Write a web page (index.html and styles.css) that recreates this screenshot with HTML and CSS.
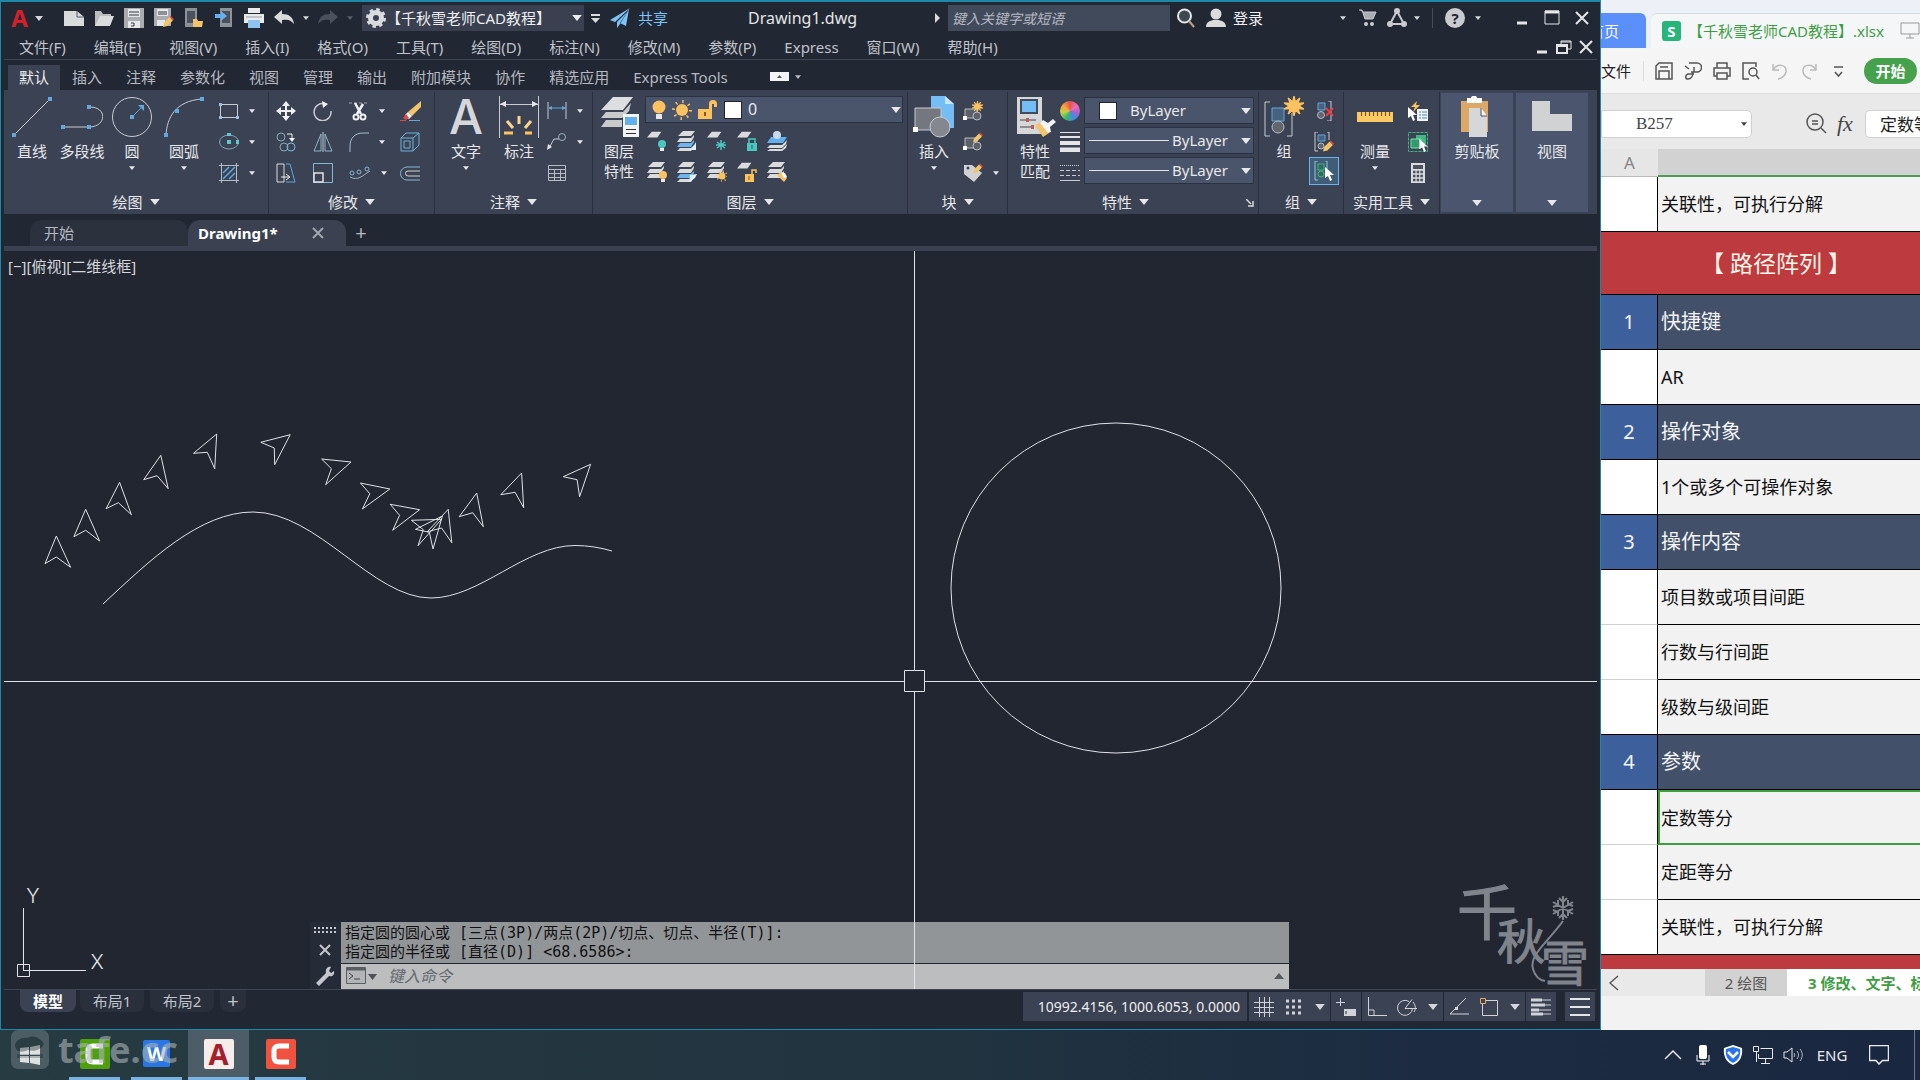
FILE: index.html
```html
<!DOCTYPE html>
<html lang="zh-CN">
<head>
<meta charset="utf-8">
<title>Drawing1.dwg</title>
<link rel="stylesheet" href="styles.css">
</head>
<body>
<svg class="sprite" aria-hidden="true">
  <symbol id="down" viewBox="0 0 8 5"><path d="M0 0h8L4 5z" fill="currentColor"/></symbol>
  <symbol id="sheet" viewBox="0 0 20 20"><path d="M6 1h12l-5 7H0z" fill="#d9dbdd"/></symbol>
  <symbol id="stack" viewBox="0 0 20 20"><path d="M6 0h12l-4 5H1z" fill="#d9dbdd"/><path d="M3 7h11l3-3v2l-3 5H0zM3 12h11l3-3v2l-3 5H0z" fill="#d9dbdd"/></symbol>
  <symbol id="stackblue" viewBox="0 0 20 20"><path d="M6 0h12l-4 5H1z" fill="#d9dbdd"/><path d="M3 7h11l3-3v2l-3 5H0z" fill="#d9dbdd"/><path d="M3 12h11l3-3v2l-3 5H0z" fill="#6fb6ee"/><path d="M3 17h11l3-3v2l-3 4H0z" fill="#d9dbdd"/></symbol>
  <symbol id="pencil" viewBox="0 0 10 10"><path d="M0 10l1-4 5-5 3 3-5 5z" fill="#f2c56b"/><path d="M6 1l1-1 3 3-1 1z" fill="#e04a3f"/></symbol>
  <symbol id="burst" viewBox="0 0 12 12"><path d="M6 0l.8 3.600L9.500 1.200 8.300 4.400 12 4.200 9 6l3 1.800-3.700-.2 1.200 3.200-2.700-2.400L6 12l-.8-3.600-2.700 2.400 1.200-3.200L0 7.800 3 6 0 4.200l3.700.2L2.500 1.200l2.700 2.400z" fill="#fbc25f" stroke="#fbc25f" stroke-width=".8"/></symbol>
  <symbol id="cursor" viewBox="0 0 10 14"><path d="M0 0v11l3-2 2 5 2-1-2-5h4z" fill="#fff"/></symbol>
</svg>
<div class="desktop">
<div class="work">
<main class="cad">
  <header class="titlebar">
    <button class="logo" aria-label="应用程序菜单"><span class="logo-a">A</span><svg class="dn"><use href="#down"/></svg></button>
    <div class="quick">
      <button aria-label="新建"><svg width="20" height="20"><path d="M0 3h13l7 6v9H0z" fill="#d9dbdd"/><path d="M13 3v6h7" fill="none" stroke="#555b68"/></svg></button>
      <button aria-label="打开"><svg width="20" height="20"><path d="M1 18V3h6l2 3h8v3" fill="#b9bcc0"/><path d="M1 18L6 8h14l-4 10z" fill="#d9dbdd"/></svg></button>
      <button aria-label="保存"><svg width="20" height="20"><path d="M0 0h20v20H0z" fill="#a9adb2"/><path d="M4 1h12v8H4zM4 13h12v7H4z" fill="#e6e7e9"/><path d="M5 4h10M5 7h10M7 15h3v3H7" stroke="#343a47" fill="none"/></svg></button>
      <button aria-label="另存为"><svg width="20" height="20"><path d="M0 0h17v18H0z" fill="#a9adb2"/><path d="M3 1h11v7H3zM3 12h8v6H3z" fill="#e6e7e9"/><path d="M4 4h9M4 6h9" stroke="#343a47"/><svg x="9" y="8" width="11" height="11"><use href="#pencil"/></svg></svg></button>
      <button aria-label="从云打开"><svg width="20" height="20"><path d="M1 0h12v19H1z" fill="#8d9299"/><path d="M3 3h8v12H3z" fill="#4b515e"/><path d="M9 19v-8h4l1 2h5l-1 6z" fill="#f2c56b"/></svg></button>
      <button aria-label="保存到云"><svg width="20" height="20"><path d="M6 0h12v19H6z" fill="#8d9299"/><path d="M8 3h8v12H8z" fill="#4b515e"/><path d="M1 6h6V3l6 5-6 5v-3H1z" fill="#62b0ee"/></svg></button>
      <button aria-label="打印"><svg width="20" height="20"><path d="M4 0h12v5H4zM0 6h20v9H0z" fill="#e9eaec"/><path d="M4 12h12v8H4z" fill="#8fc4f0"/><path d="M2 9h16" stroke="#9a9da5"/></svg></button>
      <button aria-label="放弃"><svg width="20" height="20"><path d="M0 9l8-7v4c7 0 11 3 12 10-3-4-6-5-12-4v4z" fill="#d9dbdd"/></svg></button>
      <button class="slim" aria-label="放弃列表"><svg class="dn sm"><use href="#down"/></svg></button>
      <button class="dim" aria-label="重做"><svg width="20" height="20"><path d="M20 9l-8-7v4C5 6 1 9 0 16c3-4 6-5 12-4v4z" fill="#4c515d"/></svg></button>
      <button class="slim dim" aria-label="重做列表"><svg class="dn sm"><use href="#down"/></svg></button>
    </div>
    <button class="workspace"><svg width="20" height="20" viewBox="-10 -10 20 20"><circle r="5.500" fill="none" stroke="#d9dbdd" stroke-width="5"/><circle r="8.500" fill="none" stroke="#d9dbdd" stroke-width="3" stroke-dasharray="3.400 3.270"/></svg><span>【千秋雪老师CAD教程】</span><svg class="dn lg"><use href="#down"/></svg></button>
    <button class="more" aria-label="自定义"><svg width="9" height="9"><path d="M0 1h9" stroke="#d9dbdd" stroke-width="2"/><path d="M0 4h9L4.500 9z" fill="#d9dbdd"/></svg></button>
    <button class="share"><svg width="20" height="20"><path d="M20 0L0 12l5 2zM19 1l-3 17-6-3zM18 3L7 14v6l3-4z" fill="#7cc3f7"/></svg>共享</button>
    <h1>Drawing1.dwg</h1>
    <div class="account">
      <svg width="6" height="10"><path d="M0 0l5 5-5 5z" fill="#d9dbdd"/></svg>
      <input class="search" aria-label="搜索" placeholder="键入关键字或短语">
      <button aria-label="查找"><svg width="18" height="20"><circle cx="7.500" cy="8" r="6.500" fill="#3c4a50" stroke="#e3e5e8" stroke-width="2"/><path d="M12 13l5 6" stroke="#b8a483" stroke-width="2"/></svg></button>
      <button class="login"><svg width="20" height="20"><circle cx="10" cy="6" r="5.500" fill="#d9dbdd"/><path d="M0 19c0-5 4-6 7-7h6c3 1 7 2 7 7z" fill="#d9dbdd"/></svg>登录</button>
      <button class="acct-dn" aria-label="账户"><svg class="dn sm"><use href="#down"/></svg></button>
      <button aria-label="商店"><svg width="18" height="18"><path d="M0 1h3l3 9h8l3-7H4" fill="#aaadb3" stroke="#c9cbd0"/><circle cx="7" cy="15" r="2" fill="#c9cbd0"/><circle cx="13" cy="15" r="2" fill="#c9cbd0"/></svg></button>
      <button class="app-dn" aria-label="应用"><svg width="20" height="20"><path d="M10 3L3 16h14z" fill="none" stroke="#c9cbd0" stroke-width="2"/><circle cx="10" cy="3" r="3" fill="#c9cbd0"/><circle cx="3" cy="16" r="3" fill="#c9cbd0"/><circle cx="17" cy="16" r="3" fill="#c9cbd0"/></svg><svg class="dn sm"><use href="#down"/></svg></button>
      <span class="vr"></span>
      <button class="help" aria-label="帮助"><span class="q">?</span><svg class="dn sm"><use href="#down"/></svg></button>
      <button class="win" aria-label="最小化"><svg width="14" height="16"><path d="M2 13h10" stroke="#e3e5e8" stroke-width="3"/></svg></button>
      <button class="win" aria-label="最大化"><svg width="16" height="16"><path d="M1 1h14v13H1z" fill="none" stroke="#e3e5e8"/><path d="M1 2h14" stroke="#e3e5e8" stroke-width="3"/></svg></button>
      <button class="win" aria-label="关闭"><svg width="14" height="14"><path d="M1 1l12 12M13 1L1 13" stroke="#e3e5e8" stroke-width="2"/></svg></button>
    </div>
  </header>
  <nav class="menubar">
    <button>文件(F)</button><button>编辑(E)</button><button>视图(V)</button><button>插入(I)</button><button>格式(O)</button><button>工具(T)</button><button>绘图(D)</button><button>标注(N)</button><button>修改(M)</button><button>参数(P)</button><button>Express</button><button>窗口(W)</button><button>帮助(H)</button>
    <div class="docwin">
      <button aria-label="最小化文档"><svg width="12" height="14"><path d="M1 12h10" stroke="#e3e5e8" stroke-width="3"/></svg></button>
      <button aria-label="还原文档"><svg width="16" height="14"><path d="M5 5V1h10v8h-4M5 2h10" fill="none" stroke="#e3e5e8"/><path d="M1 5h10v8H1zM1 6h10" fill="none" stroke="#e3e5e8" stroke-width="2"/></svg></button>
      <button aria-label="关闭文档"><svg width="14" height="14"><path d="M1 1l12 12M13 1L1 13" stroke="#e3e5e8" stroke-width="2"/></svg></button>
    </div>
  </nav>
  <nav class="tabs">
    <button class="on">默认</button><button>插入</button><button>注释</button><button>参数化</button><button>视图</button><button>管理</button><button>输出</button><button>附加模块</button><button>协作</button><button>精选应用</button><button>Express Tools</button>
    <button class="collapse" aria-label="折叠功能区"><svg width="19" height="9"><path d="M0 0h19v9H0z" fill="#f3f4f6"/><path d="M7 6h5L9.500 3z" fill="#555"/></svg><svg class="dn sm"><use href="#down"/></svg></button>
  </nav>
  <section class="ribbon">
    <div class="panel p-draw">
      <div class="body">
        <button class="big"><svg width="42" height="42"><path d="M3 39L39 3" stroke="#c8cbd2"/><path d="M1 37h4v4H1zM37 1h4v4h-4z" fill="#62a8dc"/></svg>直线</button>
        <button class="big"><svg width="42" height="42"><path d="M2 31h27c17-1 17-20 0-20" fill="none" stroke="#c8cbd2"/><path d="M0 29h4v4H0zM26 29h4v4h-4zM26 9h4v4h-4z" fill="#62a8dc"/></svg>多段线</button>
        <button class="big"><svg width="42" height="42"><circle cx="21" cy="21" r="19.500" fill="none" stroke="#c8cbd2"/><path d="M21 21l9-9" stroke="#62a8dc"/><path d="M27 9h6v6z" fill="#62a8dc"/><path d="M19 19h4v4h-4z" fill="#62a8dc"/></svg>圆<svg class="dn sm"><use href="#down"/></svg></button>
        <button class="big wide"><svg width="42" height="42"><path d="M3 39C4 22 12 5 39 3" fill="none" stroke="#c8cbd2"/><path d="M1 37h4v4H1zM37 1h4v4h-4zM12 13h4v4h-4z" fill="#62a8dc"/></svg>圆弧<svg class="dn sm"><use href="#down"/></svg></button>
        <div class="small one">
          <button aria-label="矩形"><svg width="20" height="20"><path d="M1.500 3.500h17v13h-17z" fill="none" stroke="#c8cbd2"/><path d="M0 15h3v3H0zM17 15h3v3h-3zM0 2h3v3H0z" fill="#9cc0dc"/></svg><svg class="dn sm"><use href="#down"/></svg></button>
          <button aria-label="椭圆"><svg width="20" height="20"><ellipse cx="10" cy="10" rx="9.500" ry="7" fill="none" stroke="#7fa6b8"/><path d="M8 8h4v4H8zM8 1h4v3H8zM17 8h3v4h-3z" fill="#5fc9c9"/></svg><svg class="dn sm"><use href="#down"/></svg></button>
          <button aria-label="图案填充"><svg width="20" height="20"><path d="M2.500 0v20M17.500 0v20M0 2.500h20M0 17.500h20" stroke="#b8bcc5"/><path d="M4 10l6-6M4 16L16 4M10 16l6-6" stroke="#62a8dc" stroke-width="1.500"/></svg><svg class="dn sm"><use href="#down"/></svg></button>
        </div>
      </div>
      <button class="ptitle">绘图<svg class="dn lg"><use href="#down"/></svg></button>
    </div>
    <div class="panel p-modify">
      <div class="body">
        <div class="small four">
          <button aria-label="移动"><svg width="20" height="20"><path d="M10 0l4 5h-3v4h4V6l5 4-5 4v-3h-4v4h3l-4 5-4-5h3v-4H5v3l-5-4 5-4v3h4V5H6z" fill="#f0f1f3"/></svg></button>
          <button aria-label="旋转"><svg width="20" height="20"><path d="M12 3a8.500 8.500 0 1 0 6 7" fill="none" stroke="#c8cbd2" stroke-width="1.500"/><path d="M9 0l6 3-5 4z" fill="#f0f1f3"/></svg></button>
          <button aria-label="修剪"><svg width="20" height="20"><path d="M0 2h20" stroke="#9aa0ab" stroke-dasharray="3 2"/><path d="M6 2l6 11M14 3L8 13" stroke="#f0f1f3" stroke-width="2.500"/><circle cx="7" cy="16" r="2.500" fill="none" stroke="#f0f1f3" stroke-width="2"/><circle cx="14" cy="16" r="2.500" fill="none" stroke="#f0f1f3" stroke-width="2"/></svg><svg class="dn sm"><use href="#down"/></svg></button>
          <button aria-label="删除"><svg width="22" height="20"><path d="M8 11L21 0v6l-9 9z" fill="#f2c56b"/><path d="M5 14l3-3 4 4-3 3-3-1z" fill="#f3f3f3"/><path d="M3 17l3-4 3 4-3 2z" fill="#e04a3f"/><path d="M0 19.500h6" stroke="#e04a3f"/><path d="M9 19.500h11" stroke="#62a8dc"/></svg></button>
          <button aria-label="复制"><svg width="20" height="20"><circle cx="5" cy="5" r="4" fill="none" stroke="#86a9b8"/><circle cx="8" cy="15" r="4" fill="none" stroke="#86a9b8"/><circle cx="15" cy="15" r="4" fill="none" stroke="#7fb8d8"/><path d="M11 2h5v5" fill="none" stroke="#f0f1f3"/><path d="M13 6h6l-3 4z" fill="#f0f1f3"/></svg></button>
          <button aria-label="镜像"><svg width="20" height="20"><path d="M8 2v17H1zM12 2v17h7z" fill="none" stroke="#8fb4c4"/><path d="M10 0v20" stroke="#c8cbd2"/></svg></button>
          <button aria-label="圆角"><svg width="20" height="20"><path d="M1 20v-6C1 6 6 1 14 1h6" fill="none" stroke="#9fc0cf"/></svg><svg class="dn sm"><use href="#down"/></svg></button>
          <button aria-label="分解"><svg width="20" height="20"><path d="M1 6h12v13H1zM1 6l5-5h13L13 6M19 1v12l-6 6M4 9h6v7H4z" fill="none" stroke="#6db2d8"/></svg></button>
          <button aria-label="拉伸"><svg width="20" height="20"><path d="M1 1h7v18H1z" fill="none" stroke="#d9dbdd"/><path d="M10 1h4l5 18h-9" fill="none" stroke="#62a8dc"/><path d="M5 14h8M10 11l4 3-4 3" fill="none" stroke="#f0f1f3"/></svg></button>
          <button aria-label="缩放"><svg width="20" height="20"><path d="M.5 .5h19v19H.5z" fill="none" stroke="#86b8d0"/><path d="M1 10h9v9H1z" fill="none" stroke="#e0e2e6" stroke-width="1.500"/></svg></button>
          <button aria-label="阵列"><svg width="22" height="20"><path d="M1 14c8 4 12-1 20-6" fill="none" stroke="#9fb3bf"/><circle cx="3" cy="10" r="2" fill="none" stroke="#86b8d0"/><circle cx="10" cy="9" r="2" fill="none" stroke="#86b8d0"/><circle cx="18" cy="6" r="2" fill="none" stroke="#86b8d0"/></svg><svg class="dn sm"><use href="#down"/></svg></button>
          <button aria-label="偏移"><svg width="20" height="20"><path d="M20 4H7a6 6 0 0 0 0 13h13" fill="none" stroke="#86b8d0"/><path d="M20 8H8a2.500 2.500 0 0 0 0 5h12" fill="none" stroke="#d0d3d8"/></svg></button>
        </div>
      </div>
      <button class="ptitle">修改<svg class="dn lg"><use href="#down"/></svg></button>
    </div>
    <div class="panel p-note">
      <div class="body">
        <button class="big"><span class="big-a">A</span>文字<svg class="dn sm"><use href="#down"/></svg></button>
        <button class="big w56"><svg width="42" height="42"><path d="M1.500 0v42M40.500 0v42M2 8.500h38" stroke="#c8cbd2"/><path d="M2 8l6-3v6zM40 8l-6-3v6z" fill="#e3e5e8"/><path d="M6 37h9M34 37h-7" stroke="#fbc25f" stroke-width="3"/><path d="M9 25l6 7M33 25l-6 7M21 20v8" stroke="#fbd58f" stroke-width="3"/></svg>标注</button>
        <div class="small one">
          <button aria-label="线性"><svg width="20" height="20"><path d="M1 1v17M19 1v17" stroke="#c8cbd2"/><path d="M2 7h16" stroke="#62a8dc"/><path d="M1 7l4-2v4zM19 7l-4-2v4z" fill="#62a8dc"/></svg><svg class="dn sm"><use href="#down"/></svg></button>
          <button aria-label="引线"><svg width="20" height="20"><circle cx="15" cy="5" r="3.500" fill="none" stroke="#9fb3bf"/><path d="M12 7H7l-5 9" fill="none" stroke="#c8cbd2"/><path d="M0 18l1-6 4 3z" fill="#e3e5e8"/></svg><svg class="dn sm"><use href="#down"/></svg></button>
          <button aria-label="表格"><svg width="20" height="20"><path d="M1.500 2.500h17v15h-17zM1 6.500h18M1 10.500h18M1 14.500h18M7.500 6v12M13.500 6v12" fill="none" stroke="#b8bcc5"/></svg></button>
        </div>
      </div>
      <button class="ptitle">注释<svg class="dn lg"><use href="#down"/></svg></button>
    </div>
    <div class="panel p-layer">
      <div class="body">
        <button class="big"><svg width="42" height="42"><path d="M15 1h20L25 14H3z" fill="#dcdedf"/><path d="M8 16h17l8-9-2 8-7 7H3zM8 24h16v7H3z" fill="#c8cacc"/><path d="M25 18h16v23H25z" fill="#f3f4f5"/><path d="M27 21h12v8H27z" fill="#62b0ee"/><path d="M28 33.500h10M28 37.500h10" stroke="#333"/></svg>图层<br>特性</button>
        <div class="stackcol">
          <button class="combo layers"><svg width="14" height="20"><circle cx="7" cy="7" r="6.500" fill="#fbc25f"/><path d="M4 14h6v5H4z" fill="#e9e9ea"/></svg><svg width="20" height="20" viewBox="-10 -10 20 20"><circle r="8.500" fill="none" stroke="#fbc25f" stroke-width="3" stroke-dasharray="1.500 5.170"/><circle r="6" fill="#fbc25f"/></svg><svg width="20" height="20"><path d="M0 9h14v10H0zM11 9V4a4 4 0 0 1 8 0v3h-3V4h-2v5" fill="#fbc25f"/><path d="M7 12v4" stroke="#8a5a1a" stroke-width="2"/></svg><i class="swatch"></i><span>0</span><svg class="dn lg"><use href="#down"/></svg></button>
          <div class="icons">
            <button aria-label="关"><svg width="20" height="20"><svg width="16" height="16"><use href="#sheet"/></svg><circle cx="15" cy="13" r="4" fill="#4cc7bd"/><path d="M13 17h4v3h-4z" fill="#e9e9ea"/></svg></button>
            <button aria-label="隔离"><svg width="20" height="20"><use href="#stackblue"/><path d="M19 11v8h-7l4-3z" fill="#dff0ff"/></svg></button>
            <button aria-label="冻结"><svg width="20" height="20"><svg width="16" height="16"><use href="#sheet"/></svg><path d="M14 9v10M10 11l8 6M18 11l-8 6M9 14h10" stroke="#4cc7bd" stroke-width="1.500"/></svg></button>
            <button aria-label="锁定"><svg width="20" height="20"><svg width="16" height="16"><use href="#sheet"/></svg><path d="M10 12h10v8H10z" fill="#4cc7bd"/><path d="M12 12v-4h6v4" fill="none" stroke="#4cc7bd" stroke-width="1.500"/><path d="M15 14v4" stroke="#245a5a"/></svg></button>
            <button aria-label="置为当前"><svg width="20" height="20"><path d="M4 6h16l-4 6H0z" fill="#62b0ee"/><path d="M3 14h12l5-5-1 4-4 4H0zM3 18h12l5-5-1 4-4 3H0z" fill="#d9dbdd"/><circle cx="10" cy="4" r="4" fill="#c9d8ea"/></svg></button>
            <button aria-label="打开所有"><svg width="20" height="20"><use href="#stack"/><circle cx="16" cy="13" r="4" fill="#fbc25f"/><path d="M14 17h4v3h-4z" fill="#e9e9ea"/></svg></button>
            <button aria-label="取消隔离"><svg width="20" height="20"><use href="#stackblue"/><path d="M12 20l1-7 7-1-2 4z" fill="#dff0ff"/></svg></button>
            <button aria-label="解冻"><svg width="20" height="20"><use href="#stack"/><circle cx="15" cy="14" r="3.500" fill="#fbc25f"/><circle cx="15" cy="14" r="5" fill="none" stroke="#fbc25f" stroke-width="1.500" stroke-dasharray="1 2.900"/></svg></button>
            <button aria-label="解锁"><svg width="20" height="20"><svg width="16" height="16"><use href="#sheet"/></svg><path d="M8 12h9v8H8z" fill="#fbc25f"/><path d="M15 12v-4h4v3" fill="none" stroke="#fbc25f" stroke-width="1.500"/><path d="M12 14v4" stroke="#8a5a1a"/></svg></button>
            <button aria-label="匹配图层"><svg width="20" height="20"><use href="#stack"/><path d="M10 13l4-3 6 6-3 4z" fill="#f2c56b"/><path d="M14 10l4 1 2 4-3 1z" fill="#fff"/></svg></button>
          </div>
        </div>
      </div>
      <button class="ptitle">图层<svg class="dn lg"><use href="#down"/></svg></button>
    </div>
    <div class="panel p-block">
      <div class="body">
        <button class="big"><svg width="42" height="42"><path d="M18 0h14l9 8v24H18z" fill="#74bdf5"/><path d="M32 0v8h9" fill="#c8e4fb"/><path d="M2 12h26v22H2z" fill="#74777f" stroke="#c8cbd2"/><circle cx="27" cy="31" r="10" fill="#84878f" stroke="#c8cbd2"/><path d="M0 31h5v5H0z" fill="#fff"/></svg>插入<svg class="dn sm"><use href="#down"/></svg></button>
        <div class="small one">
          <button aria-label="创建块"><svg width="20" height="20"><path d="M2 8h12v9H2z" fill="#5c606b" stroke="#b8bbc2"/><circle cx="14" cy="15" r="4" fill="#5c606b" stroke="#b8bbc2"/><svg x="9" y="0" width="11" height="11"><use href="#burst"/></svg><path d="M0 15h4v4H0z" fill="#fff"/></svg></button>
          <button aria-label="编辑块"><svg width="20" height="20"><path d="M2 6h12v10H2z" fill="#5c606b" stroke="#b8bbc2"/><circle cx="14" cy="14" r="4" fill="#5c606b" stroke="#b8bbc2"/><svg x="10" y="0" width="10" height="11"><use href="#pencil"/></svg><path d="M0 14h4v4H0z" fill="#fff"/></svg></button>
          <button aria-label="编辑属性"><svg width="20" height="20"><path d="M1 2h8l10 8-8 9L1 11z" fill="#d0d2d5"/><circle cx="5" cy="5" r="1.500" fill="#444"/><svg x="10" y="0" width="10" height="11"><use href="#pencil"/></svg></svg><svg class="dn sm"><use href="#down"/></svg></button>
        </div>
      </div>
      <button class="ptitle">块<svg class="dn lg"><use href="#down"/></svg></button>
    </div>
    <div class="panel p-prop">
      <div class="body">
        <button class="big"><svg width="42" height="42"><path d="M3 1h25v37H3z" fill="#d5d7d9"/><path d="M6 3h18v15H6z" fill="#444c5c"/><path d="M8 5h14v11H8z" fill="#74bdf5"/><path d="M6 24h16M6 31h14" stroke="#444"/><path d="M12 22h3v4h-3zM17 29h3v4h-3z" fill="#c05a50"/><path d="M21 29l6-3 8 11-6 4z" fill="#f2c56b"/><path d="M26 27l3-3 5 3 5-4 3 3-6 5 1 5-3 1z" fill="#f3f4f5"/></svg>特性<br>匹配</button>
        <div class="small one">
          <button aria-label="颜色"><span class="wheel"></span></button>
          <button aria-label="线宽"><svg width="20" height="20"><path d="M0 .5h20M0 5h20M0 11h20M0 18h20" stroke="#e3e5e8"/><path d="M0 5h20" stroke="#e3e5e8" stroke-width="2"/><path d="M0 11h20" stroke="#e3e5e8" stroke-width="4"/><path d="M0 18h20" stroke="#e3e5e8" stroke-width="5"/></svg></button>
          <button aria-label="线型"><svg width="20" height="20"><path d="M0 2.500h20" stroke="#c8cbd2" stroke-dasharray="1 1"/><path d="M0 7.500h20M0 12.500h20" stroke="#c8cbd2" stroke-dasharray="4 2"/><path d="M0 17.500h20" stroke="#c8cbd2"/></svg></button>
        </div>
        <div class="propcol">
          <button class="combo"><i class="swatch"></i><span>ByLayer</span><svg class="dn lg"><use href="#down"/></svg></button>
          <button class="combo"><i class="rule"></i><span>ByLayer</span><svg class="dn lg"><use href="#down"/></svg></button>
          <button class="combo"><i class="rule"></i><span>ByLayer</span><svg class="dn lg"><use href="#down"/></svg></button>
        </div>
      </div>
      <div class="prow"><button class="ptitle">特性<svg class="dn lg"><use href="#down"/></svg></button><button class="launch" aria-label="特性选项"><svg width="8" height="8"><path d="M0 0l5 5M7 2v5H2" fill="none" stroke="#d9dbdd" stroke-width="1.500"/></svg></button></div>
    </div>
    <div class="panel p-group">
      <div class="body">
        <button class="big"><svg width="42" height="42"><path d="M7 6H2v34h5M24 40h5V17" fill="none" stroke="#c8cbd2"/><path d="M9 12h12v13H9z" fill="#47617f" stroke="#62a8dc"/><circle cx="15" cy="31" r="6" fill="#62666f" stroke="#b8bbc2"/><svg x="21" y="0" width="20" height="20"><use href="#burst"/></svg></svg>组</button>
        <div class="small one">
          <button aria-label="解除编组"><svg width="20" height="20"><path d="M4 2h7v7H4z" fill="#47617f" stroke="#62a8dc"/><circle cx="7" cy="14" r="3.500" fill="#62666f" stroke="#b8bbc2"/><path d="M14 0h3v20h-4" fill="none" stroke="#c8cbd2"/><path d="M12 7l7 8M19 7l-7 8" stroke="#e23c45" stroke-width="2"/></svg></button>
          <button aria-label="组编辑"><svg width="20" height="20"><path d="M4 0H1v19h3M13 0h2v8" fill="none" stroke="#c8cbd2"/><path d="M4 3h7v6H4z" fill="#47617f" stroke="#62a8dc"/><circle cx="7" cy="14" r="3" fill="#62666f" stroke="#b8bbc2"/><svg x="9" y="8" width="11" height="12"><use href="#pencil"/></svg></svg></button>
          <button class="on" aria-label="启用组选择"><svg width="20" height="20"><path d="M4 0H1v19h3M11 0h2v8" fill="none" stroke="#9fc0cf"/><path d="M4 3h6v6H4z" fill="#2f6b58" stroke="#43b584"/><circle cx="7" cy="13" r="3" fill="#2f6b58" stroke="#43b584"/><svg x="11" y="6" width="10" height="14"><use href="#cursor"/></svg></svg></button>
        </div>
      </div>
      <button class="ptitle">组<svg class="dn lg"><use href="#down"/></svg></button>
    </div>
    <div class="panel p-util">
      <div class="body">
        <button class="big"><svg width="42" height="42"><path d="M3 16h36v10H3z" fill="#fbc964"/><path d="M7.500 16v4M11.500 16v4M15.500 16v4M19.500 16v4M23.500 16v4M27.500 16v4M31.500 16v4M35.500 16v4" stroke="#6a5227"/></svg>测量<svg class="dn sm"><use href="#down"/></svg></button>
        <div class="small one">
          <button aria-label="快速选择"><svg width="20" height="20"><path d="M9 8h11v12H9z" fill="#f3f4f5"/><path d="M11 11h2M14 11h5M11 14h2M14 14h5M11 17h2M14 17h5" stroke="#3d87c6"/><path d="M9 0L3 6h4l-2 5 7-7H8z" fill="#fbc25f"/><svg y="6" width="10" height="14"><use href="#cursor"/></svg></svg></button>
          <button aria-label="全部选择"><svg width="20" height="20"><path d="M.5 .5h19v19H.5z" fill="none" stroke="#43b584" stroke-dasharray="3 1"/><path d="M8 3h10v9H8z" fill="#43b584"/><path d="M3 7h10v9H3z" fill="#2f9a6c" stroke="#7ee0b2"/><svg x="11" y="7" width="10" height="13"><use href="#cursor"/></svg></svg></button>
          <button aria-label="快速计算器"><svg width="20" height="20"><path d="M3 0h14v20H3z" fill="#d9dbdd"/><path d="M5 2h10v4H5z" fill="#4c5260"/><path d="M5 9h10M5 13h10M5 17h10" stroke="#4c5260" stroke-width="2.500" stroke-dasharray="2.500 1.200"/></svg></button>
        </div>
      </div>
      <button class="ptitle">实用工具<svg class="dn lg"><use href="#down"/></svg></button>
    </div>
    <button class="panel folded"><svg width="42" height="42"><path d="M5 5h27v31H5z" fill="#dba868"/><path d="M11 2h4c0-3 6-3 6 0h5v5H11z" fill="#fff"/><path d="M13 12h12l6 8v21H13z" fill="#d5d7d9"/><path d="M25 12v8h6" fill="#f6f6f6" stroke="#4b556d"/></svg>剪贴板<svg class="dn lg"><use href="#down"/></svg></button>
    <button class="panel folded"><svg width="42" height="42"><path d="M1 5h18v13h22v17H1z" fill="#d0d2d4"/></svg>视图<svg class="dn lg"><use href="#down"/></svg></button>
  </section>
  <nav class="files">
    <button class="ftab">开始</button>
    <div class="ftab on"><button>Drawing1*</button><button aria-label="关闭图形"><svg width="12" height="12"><path d="M1 1l10 10M11 1L1 11" stroke="#a3a7b0" stroke-width="2"/></svg></button></div>
    <button class="plus" aria-label="新图形">+</button>
  </nav>
  <section class="canvas">
    <p class="viewlabel">[−][俯视][二维线框]</p>
    <div class="command">
      <div class="grip"><svg width="22" height="7"><path d="M0 1h22M0 5h22" stroke="#c3c6cd" stroke-width="2" stroke-dasharray="2 2"/></svg><button aria-label="关闭命令行"><svg width="12" height="12"><path d="M1 1l10 10M11 1L1 11" stroke="#c3c6cd" stroke-width="2"/></svg></button><button aria-label="命令设置"><svg width="20" height="20"><path d="M1 17L11 7c-1-4 2-7 5-6l-2 4 2 2 3-2c1 4-2 6-5 5L4 20z" fill="#c3c6cd"/></svg></button></div>
      <div class="cmdmain">
        <div class="history"><p>指定圆的圆心或 [三点(3P)/两点(2P)/切点、切点、半径(T)]:</p><p>指定圆的半径或 [直径(D)] &lt;68.6586&gt;:</p></div>
        <div class="entry"><button aria-label="最近的命令"><svg width="32" height="17"><path d="M.5 .5h19v16H.5z" fill="#b2b4b5" stroke="#5a5d61"/><path d="M1 2h18" stroke="#5a5d61" stroke-width="3"/><path d="M3 6l4 3-4 3M8 12h6" fill="none" stroke="#444"/><path d="M22 7h9l-4.500 6z" fill="#4d5054"/></svg></button><input aria-label="命令" placeholder="键入命令"><svg class="up" width="10" height="6"><path d="M0 6h10L5 0z" fill="#55585c"/></svg></div>
      </div>
    </div>
    <svg class="ucs" width="98" height="106"><path d="M8.500 97V34M8 96.500h63M2.500 90.500h12v12h-12z" fill="none" stroke="#e3e5e8"/><text x="18" y="29" text-anchor="middle">Y</text><text x="82" y="95" text-anchor="middle">X</text></svg>
    <svg class="mark" width="146" height="124"><g fill="#80848c"><text x="6" y="64" class="m1">千</text><text x="46" y="88" class="m2">秋</text><text x="90" y="110" class="m2">雪</text></g><g fill="none" stroke="#80848c" stroke-width="2"><path d="M112 50C96 72 78 84 82 98c2 7 6 11 12 12"/><path d="M112 25v24M102 31l20 12M102 43l20-12M108 27l4 4 4-4M108 47l4-4 4 4M102 36l5-2v-5M122 38l-5 2v5M102 39l5 2v4M122 35l-5-2v-4"/></g></svg>
    <svg class="drawing"><g transform="translate(-4 -251)" fill="none" stroke="#dfe2e6">
      <path d="M103 604C150 560 200 512 253 512C318 512 372 598 431 598C480 598 525 545.500 575 545.500C588 545.500 600 547.500 612 551"/>
      <path d="M56.300 536L45 563.700L56.300 557L70.600 567.300zM85.700 509.300L73.900 536.700L85.700 530.300L99.600 541zM119.600 482.300L106.100 508.700L118.400 502.700L131.400 514.700zM160.800 455.300L143.700 479.700L157.100 475.700L168.200 488.700zM216.700 434L193.500 453.300L207.300 452.300L214.700 468.700zM290.200 434.700L260.800 442.300L274.300 448L274.700 464.700zM351 462L321.600 459L331.400 468.700L325.700 484.700zM389.800 489L360.400 483L369.800 493.700L362.400 509zM419.600 509.700L390.200 504.300L399.600 515.300L392.700 530.300zM441.600 519.300L411.400 520.300L423.300 529.700L418 545.700zM442.400 516L415.500 529.300L429.400 532.300L433 549zM448.200 509.300L427.300 531.700L441.600 528L451.800 542.700zM476.700 493L459.200 516.700L472.700 512.700L483.300 526.700zM521.600 473L500.800 494.700L515.100 492.300L523.700 507.700zM590.600 464.300L563.300 476.700L577.100 479.700L579.600 496.700z"/>
      <circle cx="1116" cy="588" r="165"/>
      <path d="M914.500 251V670M914.500 692V989M4 681.500H904M925 681.500H1597M904.500 670.500h20v21h-20z"/>
    </g></svg>
  </section>
  <footer class="status">
    <div class="layouts"><button class="on">模型</button><button>布局1</button><button>布局2</button><button class="plus" aria-label="新建布局">+</button></div>
    <div class="tools">
      <span class="coords">10992.4156, 1000.6053, 0.0000</span>
      <div class="grp"><button aria-label="栅格"><svg width="20" height="20"><path d="M5.500 0v20M10.500 0v20M15.500 0v20M0 5.500h20M0 10.500h20M0 15.500h20" stroke="#d0d3da"/></svg></button><button aria-label="捕捉"><svg width="20" height="20"><path d="M2 4h16M2 10h16M2 16h16" stroke="#d0d3da" stroke-width="3" stroke-dasharray="3 3"/></svg></button><button class="slim" aria-label="捕捉设置"><svg class="dn lg"><use href="#down"/></svg></button></div>
      <div class="grp"><button aria-label="动态输入"><svg width="20" height="20"><path d="M4.500 1v8M0 5.500h9" stroke="#d0d3da"/><path d="M8 12h12v7H8z" fill="#d0d3da"/><path d="M10 14v3" stroke="#333"/></svg></button></div>
      <div class="grp"><button aria-label="正交"><svg width="20" height="20"><path d="M1.500 0v18.500H20M1 13h6v6" fill="none" stroke="#d0d3da"/></svg></button><button aria-label="极轴"><svg width="20" height="20"><path d="M12 4.500a7.500 7.500 0 1 0 3.500 7M8 11.500h12M8 11.500l7-9M16 5c3 4 3 7 1 10" fill="none" stroke="#d0d3da"/></svg></button><button class="slim" aria-label="极轴设置"><svg class="dn lg"><use href="#down"/></svg></button></div>
      <div class="grp"><button aria-label="对象捕捉追踪"><svg width="20" height="20"><path d="M1 17h19M1 17L17 1" fill="none" stroke="#d0d3da"/><path d="M6 10h3v3H6z" fill="#d0d3da"/></svg></button><button aria-label="对象捕捉"><svg width="20" height="20"><path d="M3.500 3.500h15v15h-15z" fill="none" stroke="#d0d3da"/><path d="M1.500 1.500h5v5h-5z" fill="#3b4253" stroke="#e8a864"/></svg></button><button class="slim" aria-label="捕捉选项"><svg class="dn lg"><use href="#down"/></svg></button></div>
      <div class="grp"><button aria-label="线宽显示"><svg width="20" height="20"><path d="M0 3h20M0 8h20M0 13h20M0 17h20" stroke="#d0d3da"/><path d="M0 3h11M0 8h14M0 13h8M0 17h12" stroke="#d0d3da" stroke-width="3"/></svg></button></div>
      <div class="grp last"><button aria-label="自定义"><svg width="20" height="20"><path d="M0 2h20M0 10h20M0 18h20" stroke="#e3e5e8" stroke-width="2"/></svg></button></div>
    </div>
  </footer>
</main>
<aside class="wps">
  <div class="wtabs"><button class="home">首页</button><button class="file"><span class="s">S</span><span>【千秋雪老师CAD教程】.xlsx</span><svg width="20" height="18"><path d="M1 1h18v11H1zM6 16h8M10 12v4" fill="none" stroke="#999"/></svg></button></div>
  <div class="wtools"><button class="wfile">文件</button>
    <button aria-label="保存"><svg width="18" height="18"><path d="M1 4l3-3h13v16H1zM4 17V9h10v8M5 5h8" fill="none" stroke="#555" stroke-width="1.500"/></svg></button>
    <button aria-label="输出"><svg width="18" height="18"><path d="M5 1h8a4 4 0 0 1 0 9H7M1 4l4 3M9 10c0 4-2 7-5 7s-3-4 0-5h6M10 5v5" fill="none" stroke="#555" stroke-width="1.500"/></svg></button>
    <button aria-label="打印"><svg width="18" height="18"><path d="M4 6V1h10v5M4 14H1V6h16v8h-3M4 11h10v6H4z" fill="none" stroke="#555" stroke-width="1.500"/></svg></button>
    <button aria-label="打印预览"><svg width="18" height="18"><path d="M7 17H1V1h13v4" fill="none" stroke="#555" stroke-width="1.500"/><circle cx="11" cy="10" r="4" fill="none" stroke="#555" stroke-width="1.500"/><path d="M14 13l3 4" stroke="#555" stroke-width="1.500"/></svg></button>
    <button aria-label="撤销"><svg width="18" height="18"><path d="M2 2v6h6M2 8c4-7 14-6 13 2-1 4-4 6-8 7" fill="none" stroke="#bbb" stroke-width="1.500"/></svg></button>
    <button aria-label="恢复"><svg width="18" height="18"><path d="M16 2v6h-6M16 8C12 1 2 2 3 10c1 4 4 6 8 7" fill="none" stroke="#bbb" stroke-width="1.500"/></svg></button>
    <button aria-label="更多"><svg width="18" height="18"><path d="M5 5h9M6 10l3.500 4 3.500-4" fill="none" stroke="#555" stroke-width="1.500"/></svg></button>
    <button class="start">开始</button></div>
  <div class="wformula"><button class="name">B257<svg class="dn sm"><use href="#down"/></svg></button><svg width="21" height="21"><circle cx="9" cy="9" r="8" fill="none" stroke="#555" stroke-width="1.500"/><path d="M6 8h6M6 11h6M15 15l5 5" stroke="#555" stroke-width="1.500"/></svg><i>fx</i><input aria-label="编辑栏" value="定数等分"></div>
  <div class="grid">
    <table>
      <thead><tr><th>A</th><th class="sel"></th></tr></thead>
      <tbody>
        <tr class="last"><td></td><td>关联性，可执行分解</td></tr>
        <tr class="title"><td colspan="2">【 路径阵列 】</td></tr>
        <tr class="head"><td>1</td><td>快捷键</td></tr>
        <tr class="last"><td></td><td>AR</td></tr>
        <tr class="head"><td>2</td><td>操作对象</td></tr>
        <tr class="last"><td></td><td>1个或多个可操作对象</td></tr>
        <tr class="head"><td>3</td><td>操作内容</td></tr>
        <tr><td></td><td>项目数或项目间距</td></tr>
        <tr><td></td><td>行数与行间距</td></tr>
        <tr class="last"><td></td><td>级数与级间距</td></tr>
        <tr class="head"><td>4</td><td>参数</td></tr>
        <tr><td></td><td class="cur">定数等分</td></tr>
        <tr><td></td><td>定距等分</td></tr>
        <tr class="last"><td></td><td>关联性，可执行分解</td></tr>
        <tr class="title"><td colspan="2"></td></tr>
      </tbody>
    </table>
  </div>
  <div class="sheets"><button class="prev" aria-label="上一个"><svg width="10" height="16"><path d="M9 1L1 8l8 7" fill="none" stroke="#555" stroke-width="1.500"/></svg></button><button class="sheet">2 绘图</button><button class="sheet on">3 修改、文字、标注</button></div>
</aside>
</div>
<footer class="taskbar">
  <div class="apps">
    <button class="winstart" aria-label="开始"><svg width="20" height="20"><path d="M0 3l9-1v8H0zM10 2l10-2v10H10zM0 11h9v7l-9-1zM10 11h10v9l-10-2z" fill="#fff"/></svg></button>
    <button class="app" aria-label="Camtasia"><span class="ic green"><svg width="30" height="30"><path d="M23 7H13c-3 0-5 1-5 5v6c0 4 2 5 5 5h10" fill="none" stroke="#fff" stroke-width="5"/></svg></span></button>
    <button class="app" aria-label="WPS"><span class="ic blue">W</span></button>
    <button class="app on" aria-label="AutoCAD"><span class="ic white">A</span></button>
    <button class="app" aria-label="录制器"><span class="ic red"><svg width="30" height="30"><path d="M23 7H13c-3 0-5 1-5 5v6c0 4 2 5 5 5h10" fill="none" stroke="#fff" stroke-width="5"/></svg></span></button>
    <div class="wm"><svg width="40" height="40"><rect width="38" height="39" y="0" x="1" rx="7" fill="#9aa5a8" fill-opacity=".55"/><path d="M5 16c0-5 6-9 12-8 6-4 14 0 17 6-3 6-10 8-16 6-6 3-12 2-13-4z" fill="#22343a" fill-opacity=".8"/><path d="M7 26h26" stroke="#22343a" stroke-opacity=".5" stroke-width="4"/></svg><span>tafe.cc</span></div>
  </div>
  <div class="tray">
    <button aria-label="显示隐藏的图标"><svg width="18" height="20"><path d="M1 14l8-8 8 8" fill="none" stroke="#e6e9ee" stroke-width="1.500"/></svg></button>
    <button aria-label="麦克风"><svg width="14" height="20"><rect x="3" width="8" height="14" rx="2" fill="#fff"/><path d="M1 10v6h12v-6M7 16v4M4 19h6" fill="none" stroke="#fff"/></svg></button>
    <button aria-label="安全"><svg width="20" height="20"><path d="M10 0l9 3c1 8-2 14-9 17C3 17 0 11 1 3z" fill="#fff"/><path d="M10 2l7 2c1 6-1 11-7 14-6-3-8-8-7-14z" fill="#2b74e8"/><path d="M5 7l5 5 5-5" fill="none" stroke="#fff" stroke-width="2.500"/></svg></button>
    <button aria-label="网络"><svg width="20" height="20"><path d="M7.500 3.500h12v10h-14V9M12.500 14v4M8 18.500h9M.5 1.500h5v5h-5zM3.500 7v10" fill="none" stroke="#e6e9ee"/></svg></button>
    <button aria-label="音量"><svg width="20" height="20"><path d="M1 7h3l5-4v14l-5-4H1z" fill="none" stroke="#e6e9ee"/><path d="M11 8c1 1 1 3 0 4M14 6c2 3 2 5 0 8M17 4c3 4 3 8 0 12" fill="none" stroke="#aeb6c4"/></svg></button>
    <button class="lang">ENG</button>
    <button class="note" aria-label="通知"><svg width="20" height="20"><path d="M.5 .5h19v15h-6L10 19l-3-3.500H.5z" fill="none" stroke="#e6e9ee" stroke-width="1.500"/></svg></button>
    <span class="peek"></span>
  </div>
</footer>
</div>
</body>
</html>
```
FILE: styles.css
```css
* { box-sizing: border-box; }
body { margin: 0; background: #222631; color: #d4d7dd; font: 15px/20px "Noto Sans", "Noto Sans CJK SC", sans-serif; overflow: hidden; }
button, input { font: inherit; color: inherit; background: none; border: 0; padding: 0; margin: 0; min-width: 0; }
button { display: flex; align-items: center; justify-content: center; white-space: nowrap; }
p, h1 { margin: 0; font: inherit; }
svg { flex: none; display: block; }
.sprite { position: absolute; width: 0; height: 0; }
.dn { width: 8px; height: 5px; }
.dn.sm { width: 6px; height: 4px; }
.dn.lg { width: 10px; height: 6px; }

.desktop { height: 100vh; display: grid; grid-template-rows: minmax(0, 1fr) 50px; }
.work { display: flex; min-height: 0; }
.cad { flex: 1; min-width: 0; display: flex; flex-direction: column; border: 1px solid #1f87a8; border-top-width: 2px; padding: 0 3px; background: #222833; }

/* title bar */
.titlebar { height: 33px; padding-bottom: 4px; display: flex; align-items: flex-end; flex: none; }
.titlebar > * { height: 26px; flex: none; }
.logo { width: 46px; gap: 7px; margin-right: 9px; }
.logo-a { font-size: 24px; line-height: 26px; font-weight: bold; color: #d4202b; }
.quick { display: flex; }
.quick button { width: 30px; }
.quick .slim { width: 14px; }
.quick .dim { color: #5a5f6b; }
.workspace { width: 222px; margin-left: 5px; padding: 0 2px 0 4px; background: #3a4050; color: #eceef1; }
.workspace span { flex: 1; text-align: left; }
.more { width: 22px; }
.share { gap: 8px; margin-left: 4px; color: #7cc3f7; }
.titlebar h1 { font-size: 16px; line-height: 26px; margin-left: 80px; color: #e3e5e8; }
.account { margin-left: auto; display: flex; align-items: center; }
.search { width: 222px; height: 26px; margin: 0 7px; padding: 0 4px; background: #414a5a; font-size: 14px; font-style: italic; }
.search::placeholder { color: #b3b8c2; opacity: 1; }
.login { gap: 7px; margin-left: 11px; color: #f0f1f3; }
.acct-dn { width: 44px; margin-left: 58px; }
.acct-dn + button { margin-left: -6px; }
.app-dn { gap: 7px; margin-left: 10px; }
.vr { width: 1px; height: 20px; margin: 0 12px; background: #444b59; }
.help { gap: 10px; }
.q { width: 20px; height: 20px; border-radius: 50%; background: #c9cbd0; color: #222833; font-weight: bold; }
.win { width: 30px; }
.help + .win { margin-left: 26px; }

.menubar { height: 25px; flex: none; display: flex; align-items: center; gap: 28px; padding-left: 15px; border-bottom: 1px solid #3f4552; color: #bfc3cb; }
.docwin { margin-left: auto; display: flex; }
.docwin button { width: 22px; }

.tabs { height: 30px; flex: none; display: flex; align-items: flex-end; padding-left: 4px; color: #b5b9c1; }
.tabs button { height: 25px; padding: 0 12px 2px; }
.tabs .on { padding: 0 11px 2px; background: #3b4253; color: #eceef1; }
.tabs .collapse { gap: 6px; padding-left: 30px; }

/* ribbon */
.ribbon { height: 124px; display: flex; padding-top: 2px; background: #3b4253; color: #e6e8ec; flex: none; }
.panel { flex: none; display: grid; grid-template-rows: 100px 22px; border-right: 1px solid #2a3040; }
.body { display: flex; align-items: flex-start; }
.big { width: 50px; flex-direction: column; padding-top: 4px; line-height: 20px; }
.big > svg:first-child { margin-bottom: 3px; }
.big > .dn { margin-top: 5px; }
.big-a { height: 38px; margin: 2px 0 5px; font-family: Inter, sans-serif; font-size: 48px; line-height: 38px; font-weight: 500; color: #d5d7da; }
.big.wide { width: 54px; }
.big.w56 { width: 56px; }
.small { display: grid; grid-auto-rows: 31px; padding-top: 3px; }
.small button { justify-content: flex-start; gap: 10px; }
.ptitle { gap: 7px; width: 100%; padding-bottom: 2px; }
.p-draw { width: 265px; } .p-draw .body { padding-left: 3px; } .p-draw .small { margin-left: 8px; }
.p-modify { width: 166px; } .p-modify .body { padding-left: 7px; }
.four { grid-template-columns: 37px 36px 51px 22px; }
.p-note { width: 158px; } .p-note .body { padding-left: 6px; }
.p-layer { width: 315px; } .p-layer .body { padding-left: 1px; }
.p-block { width: 100px; } .p-block .body { padding-left: 1px; } .p-block .small { margin-left: 4px; }
.p-prop { width: 251px; } .p-prop .body { padding-left: 2px; }
.p-group { width: 85px; } .p-group .small button { width: 30px; padding-left: 5px; }
.p-group .small .on { padding-left: 4px; height: 28px; border: 1px solid #6db4ea; background: #3f5d78; }
.p-util { width: 96px; } .p-util .body { padding-left: 6px; } .p-util .small { margin-left: 8px; }
.stackcol { flex: 1; padding: 4px 4px 0 1px; }
.combo { width: 100%; height: 27px; justify-content: flex-start; background: #4a546a; border: 1px solid #2a3142; padding: 0 2px; }
.combo .dn { margin-left: auto; }
.combo span { padding-bottom: 1px; }
.layers { gap: 6px; padding: 0 1px 0 6px; font-size: 16px; }
.swatch { width: 18px; height: 18px; background: #fff; border: 1px solid #20242e; }
.icons { display: grid; grid-template-columns: repeat(5, 30px); grid-auto-rows: 31px; padding-top: 2px; }
.icons button { padding-right: 6px; }
.propcol { flex: 1; display: grid; gap: 3px; padding: 5px 4px 0; }
.propcol .swatch { margin: 0 13px 0 12px; }
.rule { width: 80px; height: 1px; margin: 0 3px 0 2px; background: #e3e5e8; }
.wheel { width: 20px; height: 20px; border-radius: 50%; background: conic-gradient(#e8534f, #ec6fb1 15%, #a85fd0 28%, #3d8ee0 42%, #3fb56b 58%, #c6d24a 72%, #f6a13b 86%, #e8534f); }
.prow { display: flex; }
.launch { width: 16px; }
.folded { display: flex; flex-direction: column; justify-content: flex-start; width: 74px; height: 121px; margin-right: 1px; padding-top: 3px; background: #4b566e; border: 1px solid #3a4357; }
.folded > svg:first-child { margin-bottom: 3px; }
.folded .dn { margin: auto 0 6px; }

.files { height: 37px; flex: none; display: flex; align-items: flex-end; border-bottom: 5px solid #3b4150; padding-left: 26px; }
.ftab { height: 26px; width: 158px; padding: 0 14px; justify-content: flex-start; background: #2c313e; border-radius: 12px 12px 0 0; color: #b5b9c1; }
.ftab.on { display: flex; justify-content: space-between; padding: 0 22px 0 10px; background: #3b4150; color: #fff; font-weight: bold; }
.files .plus { width: 30px; height: 26px; font-size: 20px; color: #b5b9c1; }

/* drawing area */
.canvas { flex: 1; position: relative; min-height: 0; background: #222631; overflow: hidden; border-bottom: 1px solid #3f4552; }
.drawing { position: absolute; inset: 0; width: 100%; height: 100%; pointer-events: none; }
.viewlabel { padding: 5px 4px; }
.ucs { position: absolute; left: 11px; bottom: 9px; }
.ucs text { font: 300 20px Inter, sans-serif; fill: #e3e5e8; }
.mark { position: absolute; right: 0; bottom: -6px; }
.m1 { font: 60px "Noto Sans CJK SC", sans-serif; }
.m2 { font: 48px "Noto Sans CJK SC", sans-serif; }
.mark text { stroke: #80848c; stroke-width: 1px; }
.command { position: absolute; left: 306px; bottom: 0; width: 979px; display: flex; }
.grip { width: 31px; padding: 5px 5px 3px 4px; display: flex; flex-direction: column; align-items: center; justify-content: space-between; background: #262b38; }
.cmdmain { flex: 1; color: #111; }
.history { padding: 2px 4px 0; height: 41px; background: #929598; font-family: "DejaVu Sans Mono", "Noto Sans CJK SC", monospace; }
.history p { line-height: 19px; }
.entry { display: flex; align-items: center; height: 26px; padding: 0 5px 2px; border-top: 1px solid #23272d; background: #bbbdbe; }
.entry input { flex: 1; margin-left: 10px; font-style: italic; font-size: 16px; }
.entry input::placeholder { color: #666a6e; opacity: 1; }

.status { height: 39px; flex: none; display: flex; justify-content: space-between; padding-left: 16px; }
.layouts { display: flex; }
.layouts button { height: 22px; width: 64px; margin-right: 6px; background: #2a2f3c; border-radius: 0 0 8px 8px; color: #bfc3cb; }
.layouts .on { width: 56px; margin-right: 4px; background: #3b4253; color: #fff; font-weight: bold; }
.layouts .plus { width: 26px; font-size: 20px; }
.tools { display: flex; gap: 1px; padding-top: 2px; height: 31px; padding-right: 2px; }
.coords { width: 224px; line-height: 29px; margin-right: 1px; padding-right: 7px; font-size: 14px; text-align: right; background: #3b4253; color: #eceef1; }
.grp { display: flex; background: #3b4253; }
.grp button { width: 30px; }
.grp .slim { width: 21px; }
.grp.last { margin-left: 8px; }

/* spreadsheet window */
.wps { width: 319px; flex: none; display: flex; flex-direction: column; background: #f2f2f2; color: #222; overflow: hidden; }
.wtabs { height: 48px; padding-top: 13px; display: flex; gap: 5px; background: #edf0f6; flex: none; }
.wtabs .home { width: 45px; flex: none; justify-content: flex-end; padding-right: 27px; background: #5b8ff9; color: #fff; border-radius: 0 6px 0 0; }
.wtabs .file { flex: 1; justify-content: flex-start; padding-left: 11px; background: #f5f6f8; border-top: 1px solid #d5d9e0; border-radius: 6px 0 0 0; color: #3f9e45; }
.file > span:nth-child(2) { flex: 1; text-align: left; }
.s { width: 19px; height: 20px; margin-right: 7px; border-radius: 3px; background: #27b57c; color: #fff; font-weight: bold; }
.wtools { height: 46px; flex: none; display: flex; align-items: center; background: #f5f5f5; border-bottom: 1px solid #ddd; }
.wtools button { width: 29px; flex: none; }
.wtools .wfile { width: 43px; justify-content: flex-start; border-right: 1px solid #ddd; margin-right: 5px; }
.wtools .start { width: 53px; height: 26px; margin-left: 12px; border-radius: 13px; background: #45a14b; color: #fff; font-weight: bold; }
.wformula { height: 55px; flex: none; display: flex; align-items: center; padding-top: 4px; background: #e9e9e9; font-family: "Liberation Serif", "Noto Sans CJK SC", serif; font-size: 17px; }
.name { width: 151px; height: 28px; flex: none; padding: 0 4px 0 34px; justify-content: space-between; background: #fff; border: 1px solid #d0d0d0; border-radius: 0 5px 5px 0; color: #444; margin-right: 54px; }
.wformula i { margin: 0 12px 0 10px; font-size: 22px; color: #444; }
.wformula input { flex: 1; height: 28px; padding: 0 0 0 14px; background: #fff; border: 1px solid #d0d0d0; border-right: 0; border-radius: 5px 0 0 5px; }
.grid { flex: 1; min-height: 0; overflow: hidden; }
table { width: 110%; border-collapse: separate; border-spacing: 0; table-layout: fixed; }
th { height: 28px; padding: 0; background: #e6e6e6; color: #858585; font-weight: normal; font-size: 17px; border-bottom: 1px solid #bbb; }
th:first-child { width: 57px; }
th.sel { background: #d2d2d2; border-bottom: 2px solid #4f9a55; }
td { height: 55px; padding: 0 0 0 3px; font-size: 18px; color: #111; background: #f2f2f2; border-bottom: 1px solid #000; }
td:first-child { padding: 0; background: #fff; border-right: 1px solid #000; border-bottom-color: #d0d0d0; text-align: center; }
.last td:first-child { border-bottom-color: #000; }
.head td { background: #425069; color: #f3f5f8; font-size: 20px; }
.head td:first-child { background: #3d609d; border-bottom-color: #000; }
.title td:first-child { height: 63px; background: #bd3a3f; color: #fff5e8; font-size: 23px; border-color: #000; }
td.cur { border: 2px solid #3f9f3f; padding-left: 1px; }
.sheets { height: 61px; flex: none; display: flex; align-items: flex-start; background: #f2f2f2; }
.sheets button { height: 27px; flex: none; background: #e9e9e9; }
.sheets .prev { width: 104px; justify-content: flex-start; padding-left: 8px; }
.sheets .sheet { width: 82px; background: #d2d2d2; color: #555; }
.sheets .on { width: 170px; justify-content: flex-start; padding-left: 21px; background: #fff; color: #3f9e45; font-weight: bold; }

/* taskbar */
.taskbar { display: flex; justify-content: space-between; background: linear-gradient(90deg, #273b42, #20333f 50%, #1c2b42 75%, #1a2740); color: #e6e9ee; }
.apps { position: relative; display: flex; }
.winstart { width: 60px; }
.app { width: 51px; margin: 0 2px 0 9px; border-bottom: 3px solid #7ab2e2; }
.app + .app { margin-left: 9px; }
.app.on { width: 61px; margin: 0 0 0 4px; background: #4c5d67; }
.app.on + .app { margin-left: 6px; }
.ic { width: 30px; height: 30px; display: grid; place-items: center; border-radius: 2px; font-weight: bold; font-size: 20px; }
.green { background: #4f9e0e; } .red { background: #f0523f; }
.blue { width: 27px; height: 27px; background: #2b76e5; color: #fff; }
.white { background: #f6ecea; color: #a5202a; font-size: 29px; line-height: 30px; }
.wm { position: absolute; left: 10px; top: 0; display: flex; gap: 8px; pointer-events: none; opacity: .6; color: #a9b3b5; font: bold 36px/40px "Noto Sans", sans-serif; }
.tray { display: flex; align-items: center; }
.tray button { width: 30px; height: 50px; padding-bottom: 1px; }
.tray .lang { width: 48px; }
.tray .note { width: 46px; }
.peek { width: 1px; height: 50px; margin: 0 5px 0 12px; background: #6f7b8b; }
```
